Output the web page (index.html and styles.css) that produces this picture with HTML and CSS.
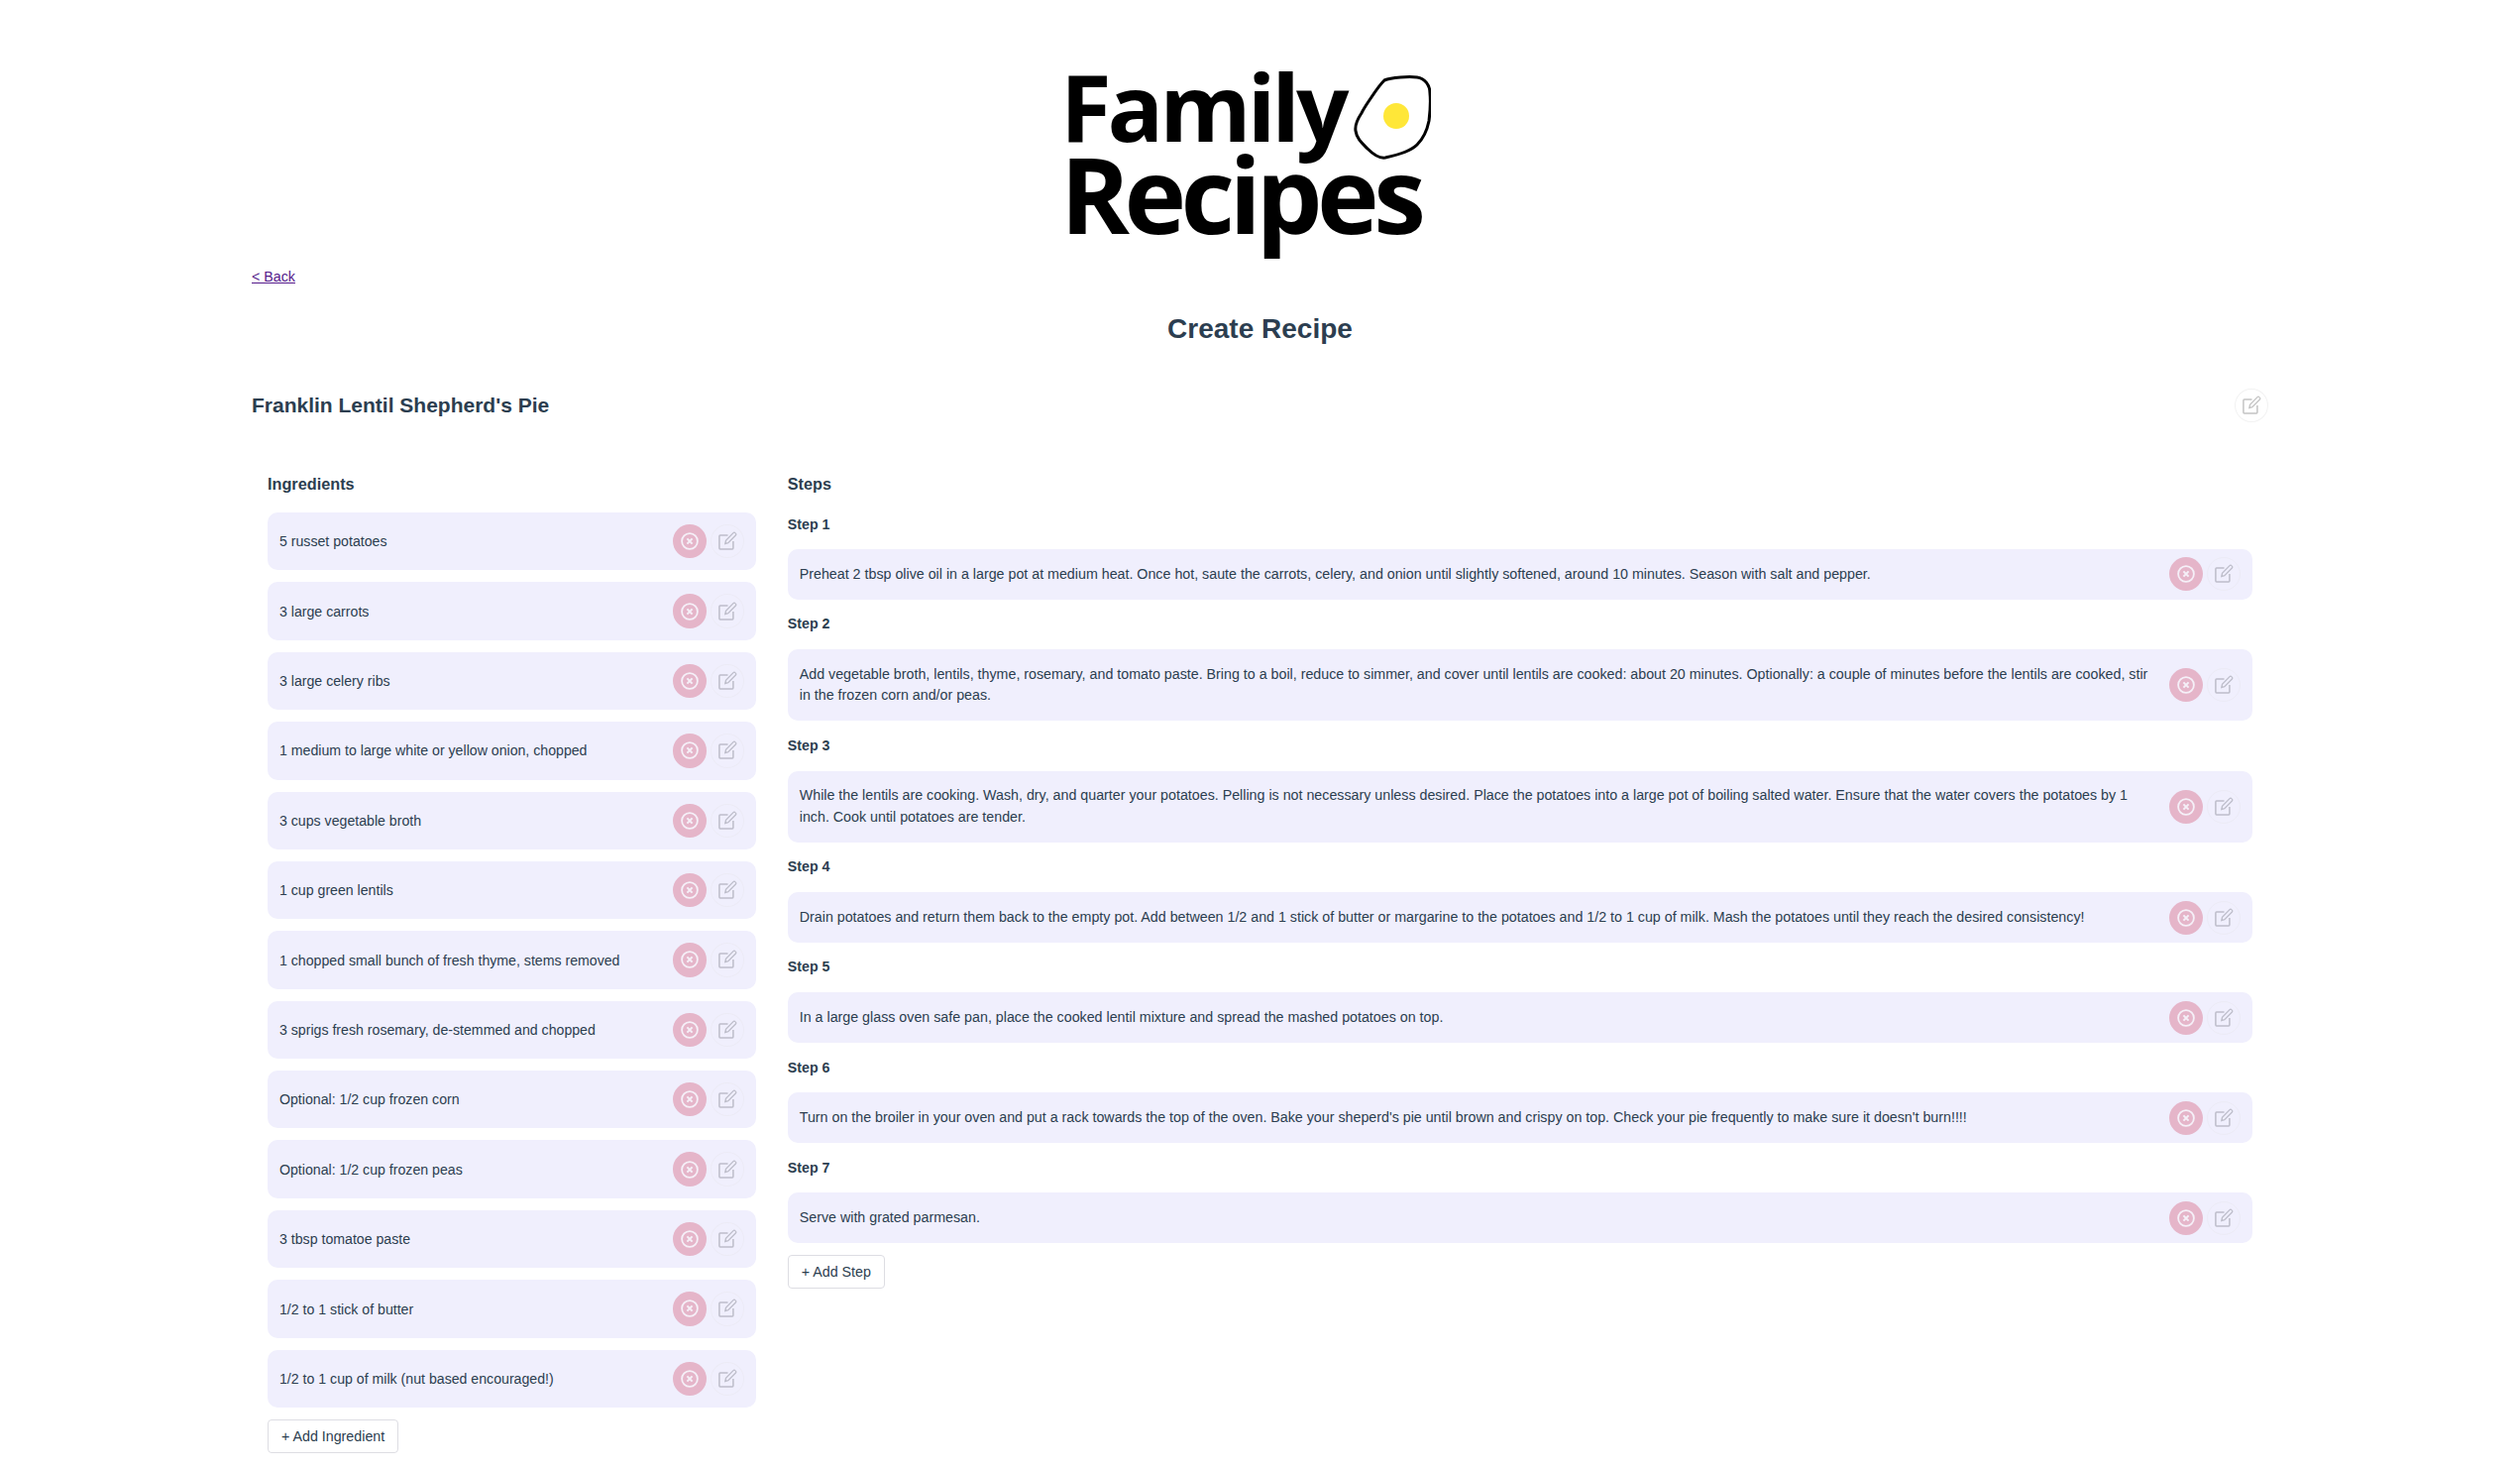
FILE: index.html
```html
<!DOCTYPE html>
<html lang="en">
<head>
    <meta charset="UTF-8">
    <meta name="viewport" content="width=device-width, initial-scale=1.0">
    <title>Create Recipe</title>
    <link rel="stylesheet" href="styles.css">
</head>
<body>

    <svg class="icon-defs" aria-hidden="true">
        <symbol id="icon-delete" viewBox="0 0 20 20">
            <circle cx="10" cy="10" r="7.9" fill="none" stroke="currentColor" stroke-width="1.8"/>
            <path d="M7.4 7.4l5.2 5.2M12.6 7.4l-5.2 5.2" fill="none" stroke="currentColor" stroke-width="2"/>
        </symbol>
        <symbol id="icon-edit" viewBox="0 0 20 20">
            <path d="M10.5 4H2.8a.9.9 0 0 0-.9.9v12.2a.9.9 0 0 0 .9.9H15a.9.9 0 0 0 .9-.9V10" fill="none" stroke="currentColor" stroke-width="1.5"/>
            <path d="M16 1.6a1.3 1.3 0 0 1 1.9 0l.5.5a1.3 1.3 0 0 1 0 1.9l-7.6 7.6-3 .9.7-3.1z" fill="none" stroke="currentColor" stroke-width="1.3"/>
        </symbol>
    </svg>

    <header class="logo">
        <div class="logo-family">Family</div>
        <div class="logo-recipes">Recipes</div>
        <svg class="logo-egg" viewBox="0 0 78 88">
            <path d="M31 7C38 4 56 3 64 4C72 5 77 12 77 20C78 30 77 40 76 48C74 58 70 66 64 72C58 78 46 82 32 85C26 86 20 82 14 76C9 71 3 66 2 58C1 52 4 46 8 40C11 34 14 30 18 24C22 18 26 12 31 7Z" fill="#fff" stroke="#000" stroke-width="3"/>
            <circle cx="43" cy="43" r="13" fill="#ffe738"/>
        </svg>
    </header>

    <main class="page">
        <a class="back-link" href="#">&lt; Back</a>
        <h1 class="page-title">Create Recipe</h1>

        <div class="recipe-name">
            <h2>Franklin Lentil Shepherd's Pie</h2>
            <button class="icon-btn edit"><svg><use href="#icon-edit"/></svg></button>
        </div>

        <div class="columns">
            <section class="ingredients">
                <h3>Ingredients</h3>
                <div class="item tall"><span>5 russet potatoes</span><button class="icon-btn delete"><svg><use href="#icon-delete"/></svg></button><button class="icon-btn edit"><svg><use href="#icon-edit"/></svg></button></div>
                <div class="item tall"><span>3 large carrots</span><button class="icon-btn delete"><svg><use href="#icon-delete"/></svg></button><button class="icon-btn edit"><svg><use href="#icon-edit"/></svg></button></div>
                <div class="item tall"><span>3 large celery ribs</span><button class="icon-btn delete"><svg><use href="#icon-delete"/></svg></button><button class="icon-btn edit"><svg><use href="#icon-edit"/></svg></button></div>
                <div class="item tall"><span>1 medium to large white or yellow onion, chopped</span><button class="icon-btn delete"><svg><use href="#icon-delete"/></svg></button><button class="icon-btn edit"><svg><use href="#icon-edit"/></svg></button></div>
                <div class="item tall"><span>3 cups vegetable broth</span><button class="icon-btn delete"><svg><use href="#icon-delete"/></svg></button><button class="icon-btn edit"><svg><use href="#icon-edit"/></svg></button></div>
                <div class="item tall"><span>1 cup green lentils</span><button class="icon-btn delete"><svg><use href="#icon-delete"/></svg></button><button class="icon-btn edit"><svg><use href="#icon-edit"/></svg></button></div>
                <div class="item tall"><span>1 chopped small bunch of fresh thyme, stems removed</span><button class="icon-btn delete"><svg><use href="#icon-delete"/></svg></button><button class="icon-btn edit"><svg><use href="#icon-edit"/></svg></button></div>
                <div class="item tall"><span>3 sprigs fresh rosemary, de-stemmed and chopped</span><button class="icon-btn delete"><svg><use href="#icon-delete"/></svg></button><button class="icon-btn edit"><svg><use href="#icon-edit"/></svg></button></div>
                <div class="item tall"><span>Optional: 1/2 cup frozen corn</span><button class="icon-btn delete"><svg><use href="#icon-delete"/></svg></button><button class="icon-btn edit"><svg><use href="#icon-edit"/></svg></button></div>
                <div class="item tall"><span>Optional: 1/2 cup frozen peas</span><button class="icon-btn delete"><svg><use href="#icon-delete"/></svg></button><button class="icon-btn edit"><svg><use href="#icon-edit"/></svg></button></div>
                <div class="item tall"><span>3 tbsp tomatoe paste</span><button class="icon-btn delete"><svg><use href="#icon-delete"/></svg></button><button class="icon-btn edit"><svg><use href="#icon-edit"/></svg></button></div>
                <div class="item tall"><span>1/2 to 1 stick of butter</span><button class="icon-btn delete"><svg><use href="#icon-delete"/></svg></button><button class="icon-btn edit"><svg><use href="#icon-edit"/></svg></button></div>
                <div class="item tall"><span>1/2 to 1 cup of milk (nut based encouraged!)</span><button class="icon-btn delete"><svg><use href="#icon-delete"/></svg></button><button class="icon-btn edit"><svg><use href="#icon-edit"/></svg></button></div>
                <button class="add-btn">+ Add Ingredient</button>
            </section>

            <section class="steps">
                <h3>Steps</h3>
                <h4>Step 1</h4>
                <div class="item"><span>Preheat 2 tbsp olive oil in a large pot at medium heat. Once hot, saute the carrots, celery, and onion until slightly softened, around 10 minutes. Season with salt and pepper.</span><button class="icon-btn delete"><svg><use href="#icon-delete"/></svg></button><button class="icon-btn edit"><svg><use href="#icon-edit"/></svg></button></div>
                <h4>Step 2</h4>
                <div class="item"><span>Add vegetable broth, lentils, thyme, rosemary, and tomato paste. Bring to a boil, reduce to simmer, and cover until lentils are cooked: about 20 minutes. Optionally: a couple of minutes before the lentils are cooked, stir in the frozen corn and/or peas.</span><button class="icon-btn delete"><svg><use href="#icon-delete"/></svg></button><button class="icon-btn edit"><svg><use href="#icon-edit"/></svg></button></div>
                <h4>Step 3</h4>
                <div class="item"><span>While the lentils are cooking. Wash, dry, and quarter your potatoes. Pelling is not necessary unless desired. Place the potatoes into a large pot of boiling salted water. Ensure that the water covers the potatoes by 1 inch. Cook until potatoes are tender.</span><button class="icon-btn delete"><svg><use href="#icon-delete"/></svg></button><button class="icon-btn edit"><svg><use href="#icon-edit"/></svg></button></div>
                <h4>Step 4</h4>
                <div class="item"><span>Drain potatoes and return them back to the empty pot. Add between 1/2 and 1 stick of butter or margarine to the potatoes and 1/2 to 1 cup of milk. Mash the potatoes until they reach the desired consistency!</span><button class="icon-btn delete"><svg><use href="#icon-delete"/></svg></button><button class="icon-btn edit"><svg><use href="#icon-edit"/></svg></button></div>
                <h4>Step 5</h4>
                <div class="item"><span>In a large glass oven safe pan, place the cooked lentil mixture and spread the mashed potatoes on top.</span><button class="icon-btn delete"><svg><use href="#icon-delete"/></svg></button><button class="icon-btn edit"><svg><use href="#icon-edit"/></svg></button></div>
                <h4>Step 6</h4>
                <div class="item"><span>Turn on the broiler in your oven and put a rack towards the top of the oven. Bake your sheperd's pie until brown and crispy on top. Check your pie frequently to make sure it doesn't burn!!!!</span><button class="icon-btn delete"><svg><use href="#icon-delete"/></svg></button><button class="icon-btn edit"><svg><use href="#icon-edit"/></svg></button></div>
                <h4>Step 7</h4>
                <div class="item"><span>Serve with grated parmesan.</span><button class="icon-btn delete"><svg><use href="#icon-delete"/></svg></button><button class="icon-btn edit"><svg><use href="#icon-edit"/></svg></button></div>
                <button class="add-btn">+ Add Step</button>
            </section>
        </div>
    </main>

</body>
</html>
```

FILE: styles.css
```css
body {
    margin: 0;
    font-family: "Liberation Sans", Arial, sans-serif;
    font-size: 14.25px;
    line-height: 1.5;
    color: #2c3e50;
    background-color: white;
}

.icon-defs {
    display: none;
}

/* Logo */
.logo {
    position: relative;
    width: 391px;
    margin: 0 auto;
    padding: 61px 0 26.6px;
}
.logo-family, .logo-recipes {
    margin-left: -6px;
    font-family: "Open Sans", sans-serif;
    font-weight: 700;
    line-height: 93px;
    color: black;
}
.logo-family {
    font-size: 94px;
    letter-spacing: -4px;
}
.logo-recipes {
    margin-top: -4.6px;
    font-size: 106px;
    letter-spacing: -5.5px;
}
.logo-egg {
    position: absolute;
    left: 290px;
    top: 74px;
    width: 78px;
    height: 88px;
}

.page {
    padding: 0 254px;
}

.back-link {
    display: block;
    color: #551a8b;
    line-height: 20px;
}

.page-title {
    margin: 21.6px 0 0;
    text-align: center;
    font-size: 28px;
    line-height: 42px;
}

.recipe-name {
    display: flex;
    align-items: center;
    justify-content: space-between;
    margin-top: 39px;
}
.recipe-name h2 {
    margin: 0;
    font-size: 21px;
    line-height: 34px;
}

.columns {
    display: grid;
    grid-template-columns: 1fr 3fr;
    gap: 32px;
    padding: 0 16px;
    margin-top: 49.6px;
}

h3 {
    margin: 0 0 17px;
    font-size: 16.25px;
}
h4 {
    margin: 14.4px 0;
    font-size: 14.25px;
}
.steps h3 {
    margin-bottom: 0;
}
.steps h4:first-of-type {
    margin: 19px 0 13.6px;
}

/* Rows */
.item {
    display: flex;
    align-items: center;
    gap: 4px;
    padding: 8px 12px;
    background-color: #f0effd;
    border-radius: 10px;
}
.item span {
    flex: 1;
    padding: 6.8px 12px 6.8px 0;
}
.item.tall {
    padding: 12px;
    margin-bottom: 12px;
}
.item.tall span {
    padding: 1.5px 0 0;
    font-size: 14.15px;
}

.icon-btn {
    flex: none;
    display: flex;
    align-items: center;
    justify-content: center;
    width: 34px;
    height: 34.4px;
    padding: 0;
    border-radius: 50%;
    background: none;
    border: 1px solid #ecebf6;
}
.item:not(.tall) .icon-btn {
    height: 34px;
}
.icon-btn svg {
    width: 20px;
    height: 20px;
}
.icon-btn.delete {
    background-color: #e5b5c9;
    border: none;
    color: #f5f0f8;
}
.icon-btn.edit {
    color: #bdbdca;
}
.recipe-name .icon-btn.edit {
    border-color: #f2f2f2;
    color: #c4c4c4;
}

.add-btn {
    display: block;
    margin-top: 12px;
    padding: 0 13px;
    height: 34px;
    font-family: inherit;
    font-size: 14.25px;
    color: #2c3e50;
    background-color: white;
    border: 1px solid #dddde3;
    border-radius: 4px;
}
.item.tall + .add-btn {
    margin-top: 0;
}
```
